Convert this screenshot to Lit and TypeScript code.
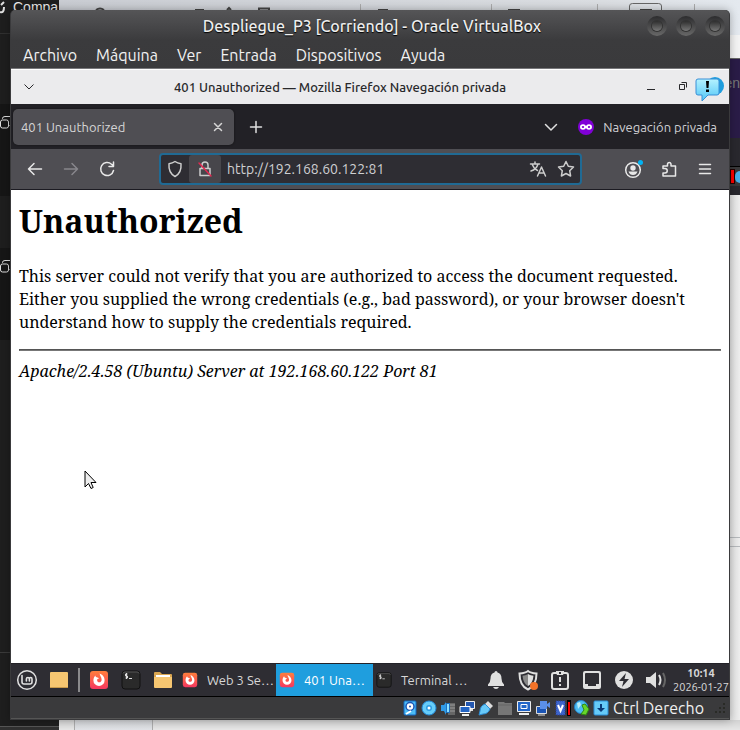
import { LitElement, html, css, svg } from "lit";
import { customElement } from "lit/decorators.js";

const line = (d: string, size = 18, cls = "line") =>
  html`<svg class=${cls} width=${size} height=${size} viewBox="0 0 18 18" aria-hidden="true"><path d=${d} /></svg>`;

const firefox = (size: number) => html`<svg width=${size} height=${size} viewBox="0 0 20 20" aria-hidden="true">
  <defs><linearGradient id="ff" x1="0" y1="0" x2="0" y2="1"><stop offset="0" stop-color="#ff7e3c" /><stop offset="1" stop-color="#f5375f" /></linearGradient></defs>
  <rect x="1" y="1" width="18" height="18" rx="3" fill="url(#ff)" />
  <path d="M10.6 3.6c2.600 .900 5 3.200 5 6.800a5.600 5.600 0 0 1-11.200 0c0-2.300 .900-3.900 2-5 .100 1 .500 1.600 1.300 1.900 1 .100 1.900 .500 2.300 1.300-1.400 0-1.900 .800-1.900 1.600 0 1.200 1 2.100 2.100 2.100 1.500 0 2.500-1.300 2.400-2.900-.100-2.300-1.700-3.500-2-5.800z" fill="#fff" />
</svg>`;

const terminal = (size: number) => html`<svg width=${size} height=${size} viewBox="0 0 20 20" aria-hidden="true">
  <rect x="1" y="1" width="18" height="18" rx="3" fill="#2a2a2a" stroke="#101010" />
  <path d="M2 3.500Q2 2 4 2h12q2 0 2 1.500" fill="none" stroke="#555" />
  <path d="M6.500 4H4.500v2h2v2h-2M5.500 3v6M8 8.500h3" fill="none" stroke="#ddd" />
</svg>`;

const overlap = svg`<rect x="0.500" y="6" width="8" height="8" rx="2" /><path d="M2.500 5V4.500Q2.500 2.500 5 2.500h6M11 11.500H9.500" />`;

@customElement("desktop-backdrop")
class DesktopBackdrop extends LitElement {
  static styles = css`
    :host { display: grid; grid-template-columns: 59px 1fr; overflow: hidden; font: 14px/14px "Liberation Sans", sans-serif; }
    .left { background: #1e1e1e; color: #e8e8e8; display: flex; flex-direction: column; }
    .head { display: flex; gap: 5px; height: 33px; border-bottom: 1px solid #303030; }
    .head svg { width: 8px; }
    .lead { height: 70px; }
    .band { background: #161616; height: 92px; padding-top: 9px; box-sizing: border-box; }
    .gap { height: 52px; }
    .fill { flex: 1; }
    .foot { height: 77px; border-top: 1px solid #3a3a3a; display: flex; flex-direction: column; justify-content: flex-end; }
    .strip { height: 3px; background: #303030; border-top: 1px solid #555; }
    .glyph { fill: none; stroke: #ddd; }
    .right { display: flex; flex-direction: column; background: linear-gradient(#cfd2d6, #e6e7e9); }
    .tools { height: 35px; background: linear-gradient(90deg, #c9ccd2, #dadde1 80%, #e4e9ef); display: flex; justify-content: flex-end; }
    .tools svg { width: 681px; height: 11px; flex: none; }
    .white { height: 23px; background: #f3f3f3; border-bottom: 1px solid #666; }
    .purple { height: 79px; background: #2a1c47; color: #777; text-align: right; line-height: 48px; }
    .dark { height: 28px; background: #29282e; border-bottom: 1px solid #000; }
    .edge { height: 9px; background: #29282e; }
    .status { height: 19px; background: #39393b; display: flex; justify-content: flex-end; align-items: center; }
    .status i { width: 3px; height: 13px; background: #f00; border: 1px solid #200; }
    .status b { width: 5px; height: 12px; border-radius: 6px 0 0 6px; background: #45aee9; }
    .page { flex: 1; background: linear-gradient(90deg, #d8d8d8 97%, #ddd 98%, #ededed); display: flex; flex-direction: column; justify-content: flex-end; }
    .rule { height: 8px; border: 1px solid #b5b8bb; border-width: 1px 0; margin-bottom: 173px; }
    .ledge { height: 10px; display: flex; background: linear-gradient(#d2d2d2, #e6e6e6); }
    .cell { width: 15px; border-right: 1px solid #aaa; }
    .cell.wide { width: 77px; background: linear-gradient(#cfd1d4, #e0e2e6); }
  `;
  render() {
    return html`
      <div class="left">
        <div class="head"><svg class="glyph" height="16" viewBox="0 0 8 16"><path d="M0 12c3 1 4-1 4-5M1 5l3-3" stroke-width="2" /></svg><span>Compa</span></div>
        <div class="lead"></div>
        <div class="band"><svg class="glyph" width="12" height="18" viewBox="0 0 12 16">${overlap}</svg></div>
        <div class="gap"></div>
        <div class="band"><svg class="glyph" width="12" height="18" viewBox="0 0 12 16">${overlap}</svg></div>
        <div class="fill"></div>
        <div class="foot"><div class="strip"></div></div>
      </div>
      <div class="right">
        <div class="tools"><svg viewBox="0 0 681 11" fill="none" stroke="#444">
          <path d="M37 10q4-3 8 0M136 10h9M168 10l2-2 2 2M200 10V8.500h10V10M319 10h10M449 10h12M581 10h12" stroke-width="2" />
          <path d="M301.500 4v6M432.500 4v6M538.500 4v6M635.500 4v6" stroke="#aaa" />
          <path d="M570.500 11V6q0-2.500 3-2.500h26q3 0 3 2.500v5" stroke="#666" />
        </svg></div>
        <div class="white"></div>
        <div class="purple">en</div>
        <div class="dark"></div>
        <div class="status"><i></i><b></b></div>
        <div class="edge"></div>
        <div class="page"><div class="rule"></div></div>
        <div class="ledge"><div class="cell"></div><div class="cell wide"></div></div>
      </div>`;
  }
}

@customElement("browser-window")
class BrowserWindow extends LitElement {
  static styles = css`
    :host { display: flex; flex-direction: column; min-width: 0; flex: 1; position: relative; font: 13px/18px Ubuntu, "Noto Sans", sans-serif; }
    button { border: 0; padding: 0; background: none; color: inherit; font: inherit; display: grid; place-items: center; }
    .line { fill: none; stroke: currentColor; stroke-width: 1.5; stroke-linecap: round; stroke-linejoin: round; }
    .thin { fill: none; stroke: currentColor; }
    .title { height: 34px; background: #ebebed; border-top: 1px solid #fff; color: #28282b; display: grid; grid-template-columns: 60px 1fr 120px; align-items: center; }
    .title button { width: 36px; height: 34px; }
    .title span { text-align: center; white-space: nowrap; font-weight: 500; }
    .title .controls { display: flex; justify-content: flex-end; padding-right: 30px; }
    .title .controls button { width: 32px; }
    .tabs { height: 45px; background: #222126; color: #e0e0e0; display: flex; align-items: center; padding: 0 12px 0 2px; }
    .tab { width: 221px; height: 36px; box-sizing: border-box; border-radius: 5px; background: #4f4e53; box-shadow: 0 0 2px #111; display: flex; align-items: center; justify-content: space-between; padding: 0 7px 0 8px; color: #d5d5d5; }
    .add { width: 36px; height: 36px; margin-left: 4px; }
    .grow { flex: 1; }
    .all { width: 36px; height: 36px; margin-right: 9px; }
    .private { display: flex; align-items: center; gap: 9px; color: #cfcfd2; }
    .nav { height: 40px; background: #4f4e53; color: #e8e8e8; display: flex; align-items: center; padding: 0 6px; border-bottom: 1px solid #1c1b22; }
    .nav > button { width: 36px; height: 36px; }
    .nav > button:disabled { color: #88878c; }
    .url { flex: 1; height: 32px; box-sizing: border-box; margin: 0 33px 0 34px; border: 2px solid #206a94; border-radius: 4px; background: #2e2d33; display: flex; align-items: center; overflow: hidden; color: #ccc; }
    .url button { width: 28px; height: 28px; flex: none; }
    .url .lock { width: 32px; background: #47464b; border-radius: 3px; }
    .url input { flex: 1; min-width: 0; border: 0; outline: 0; background: none; color: #cfcfd2; font: inherit; font-size: 14px; padding: 0 6px; }
    .page { flex: 1; background: #fff; color: #000; padding: 0 8px; font: 16px/23px "Noto Serif", "DejaVu Serif Condensed", "DejaVu Serif", serif; }
    h1 { font-size: 32px; line-height: 44px; margin: 9px 0 22px; }
    p { margin: 0 0 15px; }
    hr { margin: 0 0 9px; border: 1px solid; border-color: #555 #777 #777 #555; height: 0; }
    address { font-style: italic; }
    .bubble { position: absolute; right: 4px; top: 5px; }
    .pointer { position: absolute; left: 73px; top: 401px; }
  `;
  render() {
    return html`
      <header class="title">
        <button aria-label="Menú de ventana">${line("M4.500 6.500l4.500 4.500 4.500-4.500", 18, "thin")}</button>
        <span>401 Unauthorized — Mozilla Firefox Navegación privada</span>
        <div class="controls">
          <button aria-label="Minimizar">${line("M5 11.500h8", 18, "thin")}</button>
          <button aria-label="Restaurar">${line("M5.500 6.500h5v5h-5zM7.500 4.500h5v5", 18, "thin")}</button>
        </div>
      </header>
      <div class="tabs">
        <div class="tab"><span>401 Unauthorized</span><button aria-label="Cerrar pestaña">${line("M5.500 5.500l7 7M12.500 5.500l-7 7")}</button></div>
        <button class="add" aria-label="Nueva pestaña">${line("M9 3.500v11M3.500 9h11")}</button>
        <span class="grow"></span>
        <button class="all" aria-label="Listar pestañas">${line("M3.500 6.500L9 12l5.500-5.500")}</button>
        <div class="private">
          <svg width="16" height="16" viewBox="0 0 16 16"><circle cx="8" cy="8" r="8" fill="#8000d7" /><ellipse cx="5" cy="8" rx="2.100" ry="1.900" fill="none" stroke="#fff" stroke-width="1.700" /><ellipse cx="11" cy="8" rx="2.100" ry="1.900" fill="none" stroke="#fff" stroke-width="1.700" /><path d="M6.500 7h3v2h-3z" fill="#fff" /></svg>
          <span>Navegación privada</span>
        </div>
      </div>
      <nav class="nav">
        <button aria-label="Atrás">${line("M15.500 9h-13M8 3.500L2.500 9 8 14.500")}</button>
        <button aria-label="Adelante" disabled>${line("M2.500 9h13M10 3.500L15.500 9 10 14.500")}</button>
        <button aria-label="Recargar">${line("M15.500 10.500A6.500 6.500 0 1 1 13.500 4.200L15.500 6M15.500 2v4.500H11")}</button>
        <div class="url">
          <button aria-label="Protección">${line("M9 1.500c2 1.500 4 2 6 2.200.500 6-1.500 10.300-6 12.800C4.500 14 2.500 9.700 3 3.700 5 3.500 7 3 9 1.500z")}</button>
          <button class="lock" aria-label="Conexión no segura"><svg class="line" width="18" height="18" viewBox="0 0 18 18"><path d="M4 8.500h10v7H4zM6 8V5a3 3 0 0 1 6 0v3" /><path d="M3 3l12 13" stroke="#e22850" /></svg></button>
          <input aria-label="Dirección" value="http://192.168.60.122:81" />
          <button aria-label="Traducir">${line("M1.500 4h9M6 2v2M9 4c-1 3.500-3.500 6-7 7M3.500 5c1 3 3 4.500 5 5.500M8.500 16l4-9 4 9M10 13h5")}</button>
          <button aria-label="Marcador">${line("M9 1.500l2.300 4.800 5.200.700-3.800 3.700.900 5.300L9 13.500 4.400 16l.900-5.300L1.500 7l5.200-.700z")}</button>
        </div>
        <button aria-label="Cuenta"><svg width="20" height="20" viewBox="0 0 20 20"><circle cx="10" cy="11" r="7.300" fill="none" stroke="#e8e8e8" stroke-width="1.500" /><circle cx="10" cy="9" r="2.700" fill="#e8e8e8" /><path d="M5.500 12.500h9q-1.200 3.500-4.500 3.500t-4.500-3.500z" fill="#e8e8e8" /><circle cx="17.500" cy="3.500" r="2.500" fill="#00b3f4" /></svg></button>
        <button aria-label="Extensiones">${line("M3 8.500V6h4.500V4a1.800 1.800 0 0 1 3.500 0v2h4.500v10H3v-3h2a2 2 0 0 0 0-4.500z")}</button>
        <button aria-label="Menú">${line("M3.500 4.500h11M3.500 9h11M3.500 13.500h11")}</button>
      </nav>
      <main class="page">
        <h1>Unauthorized</h1>
        <p>This server could not verify that you are authorized to access the document requested. Either you supplied the wrong credentials (e.g., bad password), or your browser doesn't understand how to supply the credentials required.</p>
        <hr />
        <address>Apache/2.4.58 (Ubuntu) Server at 192.168.60.122 Port 81</address>
      </main>
      <svg class="bubble" width="30" height="30" viewBox="0 0 30 30" aria-hidden="true">
        <defs><linearGradient id="bb" x1="0" y1="0" x2="0" y2="1"><stop offset="0" stop-color="#b5f2ff" /><stop offset="1" stop-color="#4fc5f6" /></linearGradient></defs>
        <circle cx="20" cy="12" r="9" fill="#1f9ede" />
        <path d="M3 5h19q2 0 2 2v12q0 2-2 2h-9l-6 6v-6H3q-2 0-2-2V7q0-2 2-2z" fill="url(#bb)" stroke="#3a8fd6" />
        <path d="M11 7h3l-.500 7h-2zM11 15.500h3v2.500h-3z" fill="#000" />
      </svg>
      <svg class="pointer" width="14" height="20" viewBox="0 0 14 20" aria-hidden="true"><path d="M1 1v16l3.500-3.500L7 18.500l2.200-1L7 12.500h5z" fill="#eee" stroke="#000" /></svg>`;
  }
}

@customElement("guest-taskbar")
class GuestTaskbar extends LitElement {
  static styles = css`
    :host { display: flex; align-items: center; height: 32px; background: #2e2d33; color: #d8d8d8; border-top: 1px solid #232228; border-bottom: 1px solid #000; font: 13px/16px Ubuntu, "Noto Sans", sans-serif; white-space: nowrap; }
    button { border: 0; padding: 0; background: none; color: inherit; font: inherit; display: flex; align-items: center; justify-content: center; height: 32px; flex: none; }
    .launch { width: 32px; }
    .sep { width: 2px; height: 24px; background: #8a8a8c; margin: 0 3px; }
    .task { width: 97px; gap: 9px; justify-content: flex-start; padding-left: 3px; box-sizing: border-box; }
    .active { background: #1f9ede; color: #fff; }
    .tray { margin: 0 1px 0 auto; display: flex; }
    .tray button { width: 32px; }
    time { display: flex; flex-direction: column; align-items: center; width: 56px; font-size: 11px; line-height: 14px; }
  `;
  render() {
    return html`
      <button class="launch" aria-label="Menú"><svg width="22" height="22" viewBox="0 0 22 22" fill="none" stroke="#e0e0e0" stroke-linecap="round"><circle cx="11" cy="11" r="9.300" stroke-width="1.500" /><path d="M6 6.500V13q0 2 2 2h6q2 0 2-2v-3q0-1.500-1.300-1.500T13.400 10v2M13.400 10q0-1.500-1.500-1.500T10.400 10v2" stroke-width="1.600" /></svg></button>
      <button class="launch" aria-label="Escritorio"><svg width="20" height="20" viewBox="0 0 20 20"><rect x="1" y="2" width="18" height="16" rx="1" fill="#f6c671" /><path d="M1 17.500h18" stroke="#c99a4b" /></svg></button>
      <span class="sep"></span>
      <button class="launch" aria-label="Firefox">${firefox(20)}</button>
      <button class="launch" aria-label="Terminal">${terminal(20)}</button>
      <button class="launch" aria-label="Archivos"><svg width="20" height="20" viewBox="0 0 20 20"><path d="M1 3q0-1 1-1h5l2 2h9q1 0 1 1v12H1z" fill="#d9a550" /><path d="M3 5h14v3H3z" fill="#fff" /><path d="M1 7h18v10q0 1-1 1H2q-1 0-1-1z" fill="#f6c671" /></svg></button>
      <button class="task">${firefox(16)}<span>Web 3 Se…</span></button>
      <button class="task active">${firefox(16)}<span>401 Una…</span></button>
      <button class="task">${terminal(16)}<span>Terminal …</span></button>
      <div class="tray">
        <button aria-label="Notificaciones"><svg width="18" height="20" viewBox="0 0 18 20" fill="#e0e0e0"><path d="M9 1q1.500 0 1.500 1.500 4 1.200 4 6 0 4 2.500 6v1.500H1V14.500q2.500-2 2.500-6 0-4.800 4-6Q7.500 1 9 1zM6 17h6q-1 2-3 2t-3-2z" /></svg></button>
        <button aria-label="Actualizaciones"><svg width="22" height="22" viewBox="0 0 22 22"><path d="M11 2c2.500 2 5 2.300 8.500 2.500C19.500 12 17 18 11 20.500 5 18 2.500 12 2.500 4.500 6 4.300 8.500 4 11 2z" fill="none" stroke="#e0e0e0" stroke-width="2" /><path d="M11 5c2 1 3.500 1.500 5.500 1.700C16 12 14 15.500 11 17z" fill="#e0e0e0" /><path d="M11 5c-2 1-3.500 1.500-5.500 1.700C6 12 8 15.500 11 17z" fill="#888" /><circle cx="17" cy="17" r="4" fill="#f37329" /></svg></button>
        <button aria-label="Informe"><svg width="20" height="20" viewBox="0 0 20 20"><rect x="2" y="3" width="16" height="16" rx="2" fill="none" stroke="#e0e0e0" stroke-width="2" /><path d="M6 3V1h8v2l-1 2H7zM9 7h2v5H9zM9 14h2v2H9z" fill="#e0e0e0" /><path d="M9 2h2v2H9z" fill="#2e2d33" /></svg></button>
        <button aria-label="Red"><svg width="20" height="20" viewBox="0 0 20 20"><path fill-rule="evenodd" d="M3 1h14q2 0 2 2v14q0 2-2 2H3q-2 0-2-2V3q0-2 2-2zM4 3Q3 3 3 4v10h3v2h8v-2h3V4q0-1-1-1z" fill="#e0e0e0" /></svg></button>
        <button aria-label="Energía"><svg width="20" height="20" viewBox="0 0 20 20"><circle cx="10" cy="10" r="9" fill="#e0e0e0" /><path d="M12 3l-7 8h4.500L8 17l7-8h-4.500z" fill="#2e2d33" /></svg></button>
        <button aria-label="Volumen"><svg width="22" height="20" viewBox="0 0 22 20" fill="none" stroke-width="2"><path d="M1 7h4l6-5v16l-6-5H1z" fill="#e0e0e0" /><path d="M14 5q3 5 0 10" stroke="#e0e0e0" /><path d="M18 3q4 7 0 14" stroke="#666" /></svg></button>
      </div>
      <time datetime="2026-01-27T10:14"><b>10:14</b><span>2026-01-27</span></time>`;
  }
}

const deviceIcons: [string, unknown][] = [
  ["Disco duro", svg`<rect x="2" y="1" width="12" height="14" rx="1" fill="#4cbcf5" stroke="#1565c0" /><circle cx="8" cy="6.500" r="4" fill="#fff" stroke="#1b55b5" stroke-width="1.500" /><circle cx="8" cy="6.500" r="1" fill="#1b55b5" /><path d="M4 14l5-3" stroke="#fff" stroke-width="2" />`],
  ["Disco óptico", svg`<circle cx="8" cy="8" r="7" fill="#66cdfa" stroke="#2389d8" /><circle cx="8" cy="8" r="3" fill="#2d9de5" /><circle cx="8" cy="8" r="1.500" fill="#fff" />`],
  ["Audio", svg`<path d="M8 3h7v12H8z" fill="#666" /><path d="M10 5h5M10 8h5M10 11h5" stroke="#999" /><path d="M1 5h3l2-3v13l-2-4H1z" fill="#2f9be8" /><path d="M6.500 3.500h3v9h-3z" fill="#8be0ff" stroke="#1b6ec0" />`],
  ["Red", svg`<path d="M6.500 1.500h9v7h-9z" fill="#2357b0" stroke="#eee" /><path d="M9 10h5" stroke="#ddd" stroke-width="2" /><path d="M1 6.500h10v6H1z" fill="#2465c4" stroke="#fff" /><path d="M3 15h7" stroke="#eee" stroke-width="2" />`],
  ["USB", svg`<path d="M10 1l5 5-3 3-5-5z" fill="#ddd" stroke="#888" /><path d="M7 4l5 5q-2 5-7 5l-4 1 1-4q0-5 5-7z" fill="#68c9f8" stroke="#2c8cd4" />`],
  ["Carpetas", svg`<path d="M1 2h6l1 1h7v12H1z" fill="#777" /><path d="M1 5h14" stroke="#666" />`],
  ["Pantalla", svg`<path d="M1.500 1.500h13v10h-13z" fill="#2266c8" stroke="#eee" /><path d="M5 4.500h6v4H5z" fill="#2266c8" stroke="#fff" /><path d="M3 14h10" stroke="#eee" stroke-width="2" />`],
  ["Grabación", svg`<path d="M1.500 6.500h10v7h-10z" fill="#1b55b5" stroke="#ddd" /><path d="M5 1h7v8H5zM12 4l3-2v6l-3-2z" fill="#5b8fe8" /><path d="M3 15h7" stroke="#ddd" />`],
];

@customElement("app-root")
class AppRoot extends LitElement {
  static styles = css`
    :host { display: grid; min-height: 100vh; position: relative; padding: 10px; box-sizing: border-box; font-family: Ubuntu, "Noto Sans", sans-serif; }
    desktop-backdrop { position: absolute; inset: 0; }
    .window { position: relative; display: flex; flex-direction: column; min-width: 0; border: 1px solid #3a3a3c; border-top: 0; border-radius: 5px 5px 0 0; overflow: hidden; background: #3a3a3c; box-shadow: 0 0 8px rgba(0, 0, 0, 0.3); }
    .top { background: linear-gradient(#555557, #3b3b3d 52%, #3a3a3c); color: #eee; border-bottom: 1px solid #77777a; }
    .title { display: grid; grid-template-columns: 104px 1fr 100px; align-items: center; height: 31px; }
    h2 { margin: 0; font-size: 16px; line-height: 24px; font-weight: 500; text-align: center; white-space: nowrap; text-shadow: 0 1px 1px #000; }
    .controls { display: flex; gap: 9px; justify-content: flex-end; padding-right: 4px; }
    .controls button { width: 20px; height: 20px; border: 0; border-radius: 10px; padding: 0; background: linear-gradient(#2c2c2e, #686868); display: grid; place-items: center; }
    .controls button::before { content: ""; width: 10px; height: 10px; border-radius: 5px; background: linear-gradient(#2e2e2e, #777); box-shadow: 0 0 0 1px #333; }
    .menu { display: flex; gap: 19px; height: 27px; padding: 0 12px; align-items: center; }
    .menu button { border: 0; background: none; padding: 0; color: #f2f2f2; font: 16px/22px Ubuntu, "Noto Sans", sans-serif; }
    .status { height: 22px; display: flex; align-items: center; justify-content: flex-end; gap: 3px; color: #f0f0f0; font-size: 16px; line-height: 20px; padding-right: 3px; border-bottom: 1px solid #555; box-sizing: border-box; }
    .status svg { flex: none; }
    .host-key { margin: 0 7px 0 1px; }
  `;
  render() {
    const menus = ["Archivo", "Máquina", "Ver", "Entrada", "Dispositivos", "Ayuda"];
    return html`
      <desktop-backdrop></desktop-backdrop>
      <section class="window">
        <header class="top">
          <div class="title">
            <span></span>
            <h2>Despliegue_P3 [Corriendo] - Oracle VirtualBox</h2>
            <div class="controls"><button aria-label="Minimizar"></button><button aria-label="Maximizar"></button><button aria-label="Cerrar"></button></div>
          </div>
          <nav class="menu">${menus.map((m) => html`<button>${m}</button>`)}</nav>
        </header>
        <browser-window></browser-window>
        <guest-taskbar></guest-taskbar>
        <footer class="status">
          ${deviceIcons.map(([name, art]) => html`<svg width="16" height="16" viewBox="0 0 16 16" role="img" aria-label=${name}>${art}</svg>`)}
          <svg width="17" height="16" viewBox="0 0 17 16" role="img" aria-label="Virtualización"><rect x="2" y="1" width="9" height="14" fill="#3d65cb" stroke="#2a3f9a" stroke-dasharray="1 1" /><path d="M4 5l2.500 6L9 5" fill="none" stroke="#fff" stroke-width="2" /><rect x="13" y="0" width="4" height="16" fill="#000" /><rect x="14" y="2" width="2" height="13" fill="#f00" /></svg>
          <svg width="16" height="16" viewBox="0 0 16 16" role="img" aria-label="Ratón"><circle cx="7" cy="7" r="6.500" fill="#4dbdf2" stroke="#2382c8" /><path d="M3 3l3-1 1 3-3 4z" fill="#b7edfa" /><path d="M8 5l3-1 4 5-3 6-5-1 3-4z" fill="#67d52a" stroke="#2f8a12" /></svg>
          <svg width="16" height="16" viewBox="0 0 16 16" role="img" aria-label="Teclado"><rect x="1" y="1" width="14" height="14" rx="1" fill="#66cbf8" stroke="#2b8ed8" /><path d="M7 4h2v4h3l-4 4-4-4h3z" fill="#093a78" /></svg>
          <span class="host-key">Ctrl Derecho</span>
          <svg width="12" height="14" viewBox="0 0 12 14" fill="#292a26" aria-hidden="true"><path d="M9 2h2v2H9zM5 6h2v2H5zM9 6h2v2H9zM1 10h2v2H1zM5 10h2v2H5zM9 10h2v2H9z" /></svg>
        </footer>
      </section>`;
  }
}
